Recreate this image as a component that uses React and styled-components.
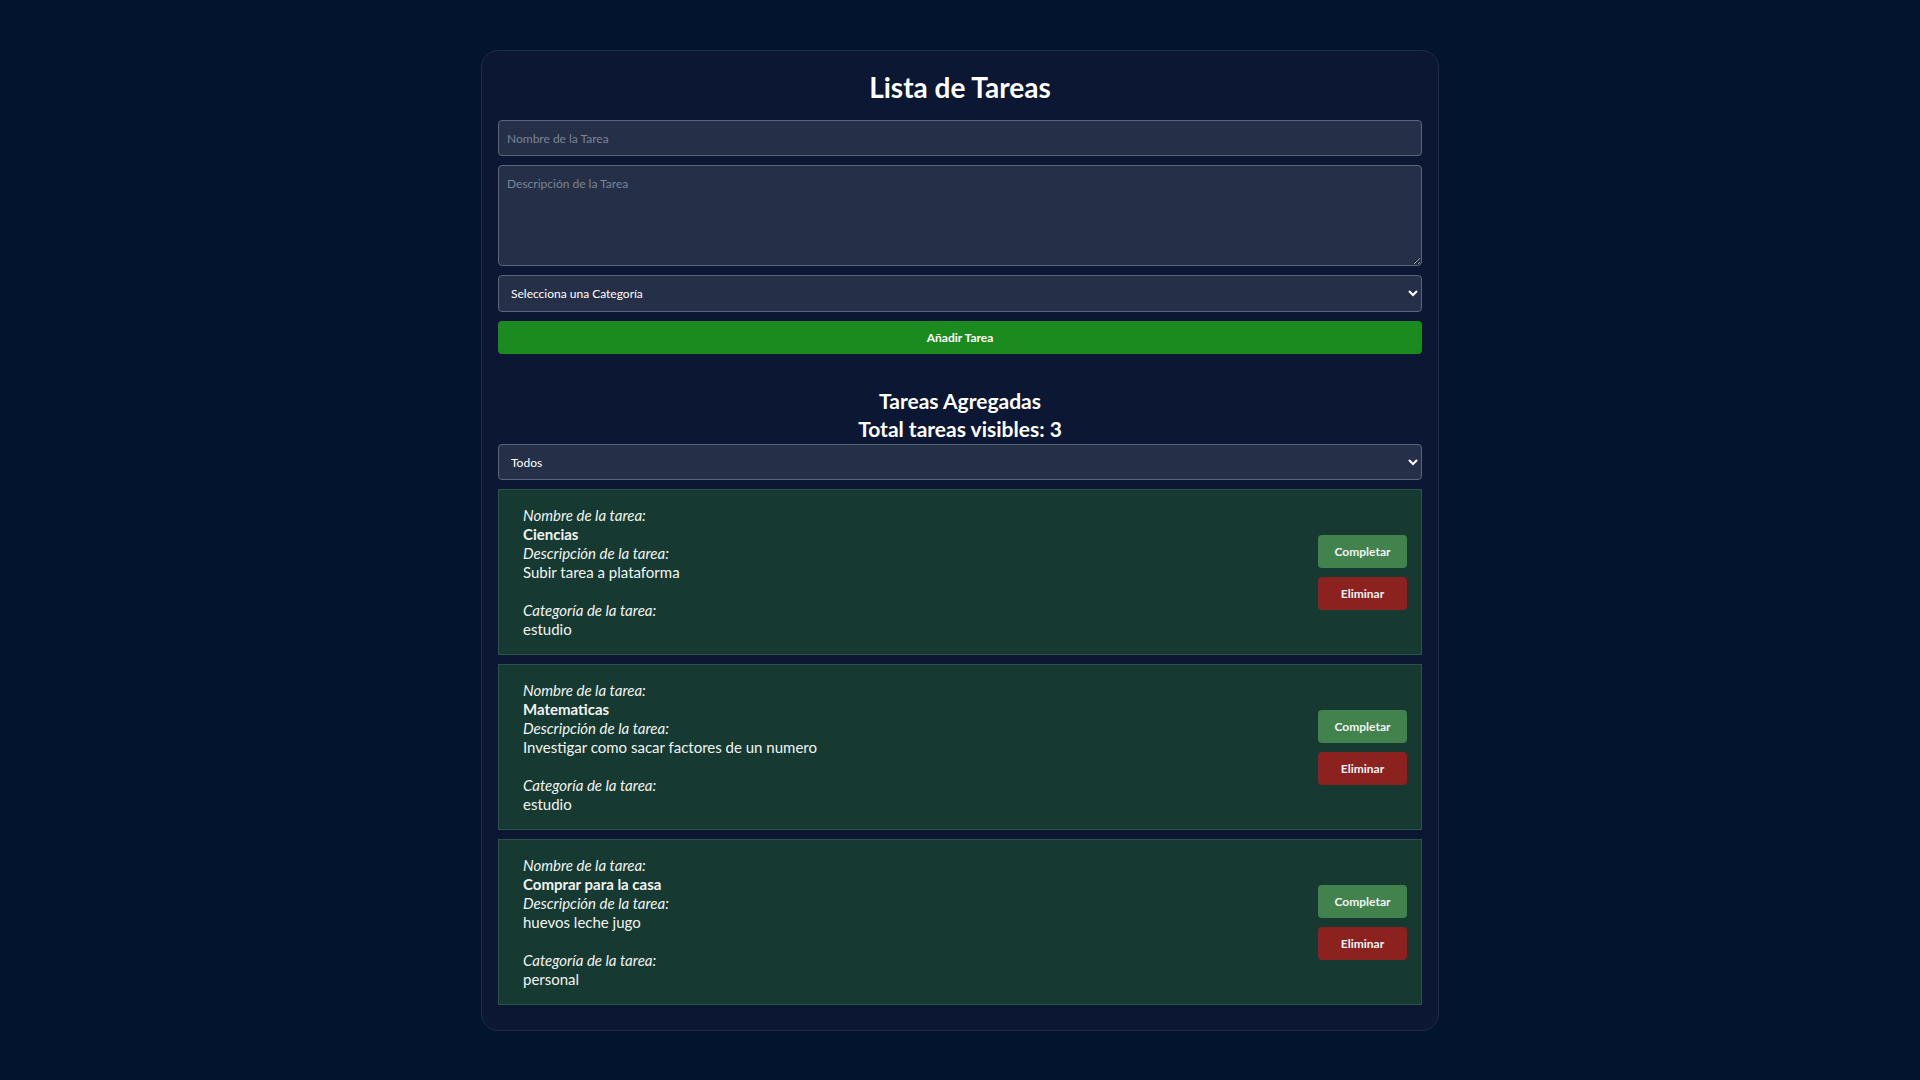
import styled, { createGlobalStyle } from "styled-components";

const GlobalStyle = createGlobalStyle`
    html, body {
        margin: 0;
        padding: 0;
        background: #03142f;
        color-scheme: dark;
    }
    body {
        font-family: Lato, "Open Sans", sans-serif;
        color: #ffffff;
    }
`;

const Page = styled.div`
    display: flex;
    justify-content: center;
    padding: 50px 0;
    min-height: 100vh;
    box-sizing: border-box;
`;

const Container = styled.div`
    width: 958px;
    box-sizing: border-box;
    background: #0c1833;
    border: 1px solid #1f2b47;
    border-radius: 17px;
    padding: 16px 16px 25px;
`;

const Title = styled.h1`
    margin: 3px 0 16px;
    font-size: 28px;
    font-weight: 700;
    text-align: center;
    line-height: 34px;
`;

const Form = styled.div`
    display: flex;
    flex-direction: column;
    gap: 9px;
`;

const fieldStyle = `
    width: 100%;
    box-sizing: border-box;
    background: #253048;
    border: 1px solid #5b6478;
    border-radius: 4px;
    color: #ffffff;
    font-family: Lato, "Open Sans", sans-serif;
    font-size: 12px;
    outline: none;
    &::placeholder {
        color: #7c8395;
    }
`;

const TextInput = styled.input`
    ${fieldStyle}
    height: 36px;
    padding: 0 8px;
`;

const TextArea = styled.textarea`
    ${fieldStyle}
    height: 101px;
    padding: 10px 8px;
    resize: vertical;
    display: block;
`;

const Select = styled.select`
    ${fieldStyle}
    height: ${props => props.$h || 37}px;
    padding: 0 8px;
`;

const AddButton = styled.button`
    height: 33px;
    border: none;
    border-radius: 4px;
    background: #1b8b1f;
    color: #ffffff;
    font-family: Lato, "Open Sans", sans-serif;
    font-size: 12px;
    font-weight: 700;
    cursor: pointer;
`;

const ListHeader = styled.h2`
    margin: 33px 0 1px;
    font-size: 21px;
    font-weight: 700;
    text-align: center;
    line-height: 28px;
`;

const TaskList = styled.div`
    display: flex;
    flex-direction: column;
    gap: 9px;
    margin-top: 9px;
`;

const Card = styled.div`
    display: flex;
    align-items: center;
    justify-content: space-between;
    background: #163a31;
    border: 1px solid #2a5446;
    padding: 14px 14px 14px 24px;
    height: 166px;
    box-sizing: border-box;
`;

const Info = styled.div`
    font-size: 15px;
    line-height: 19px;
    color: #f2f4f2;
`;

const Label = styled.em`
    display: block;
`;

const Name = styled.strong`
    display: block;
`;

const Value = styled.span`
    display: block;
    margin-bottom: ${props => (props.$gap ? "19px" : "0")};
`;

const Actions = styled.div`
    display: flex;
    flex-direction: column;
    gap: 9px;
    width: 89px;
`;

const ActionButton = styled.button`
    height: 33px;
    border: none;
    border-radius: 4px;
    background: ${props => (props.$danger ? "#8b221f" : "#42834d")};
    color: #f3f3f3;
    font-family: Lato, "Open Sans", sans-serif;
    font-size: 12px;
    font-weight: 700;
    cursor: pointer;
`;

const tasks = [
    { id: 1, name: "Ciencias", desc: "Subir tarea a plataforma", cat: "estudio" },
    { id: 2, name: "Matematicas", desc: "Investigar como sacar factores de un numero", cat: "estudio" },
    { id: 3, name: "Comprar para la casa", desc: "huevos leche jugo", cat: "personal" },
];

const App = () => {
    return (
        <Page>
            <GlobalStyle />
            <Container>
                <Title>Lista de Tareas</Title>
                <Form>
                    <TextInput placeholder="Nombre de la Tarea" />
                    <TextArea placeholder="Descripción de la Tarea" />
                    <Select defaultValue="">
                        <option value="">Selecciona una Categoría</option>
                        <option value="estudio">estudio</option>
                        <option value="personal">personal</option>
                    </Select>
                    <AddButton>Añadir Tarea</AddButton>
                </Form>
                <ListHeader>
                    Tareas Agregadas
                    <br />
                    Total tareas visibles: {tasks.length}
                </ListHeader>
                <Select $h={36} defaultValue="todos">
                    <option value="todos">Todos</option>
                    <option value="estudio">estudio</option>
                    <option value="personal">personal</option>
                </Select>
                <TaskList>
                    {tasks.map(t => (
                        <Card key={t.id}>
                            <Info>
                                <Label>Nombre de la tarea:</Label>
                                <Name>{t.name}</Name>
                                <Label>Descripción de la tarea:</Label>
                                <Value $gap>{t.desc}</Value>
                                <Label>Categoría de la tarea:</Label>
                                <Value>{t.cat}</Value>
                            </Info>
                            <Actions>
                                <ActionButton>Completar</ActionButton>
                                <ActionButton $danger>Eliminar</ActionButton>
                            </Actions>
                        </Card>
                    ))}
                </TaskList>
            </Container>
        </Page>
    );
};

export default App;
